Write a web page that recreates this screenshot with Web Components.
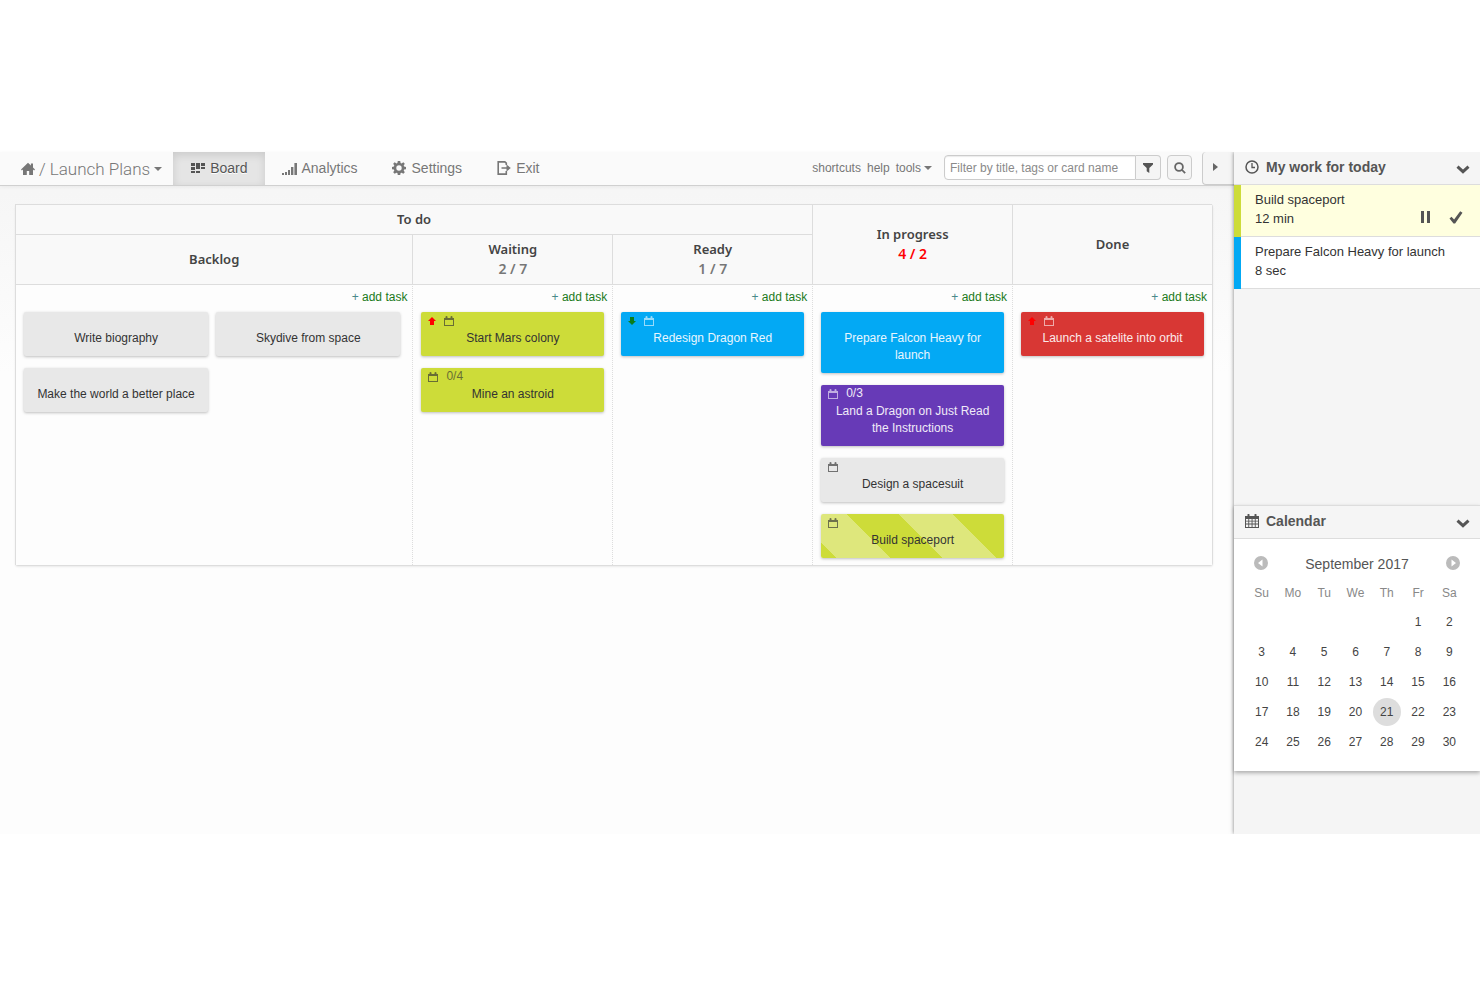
<!DOCTYPE html>
<html lang="en">
<head>
<meta charset="utf-8">
<title>Launch Plans - Board</title>
<style>
    body {
        margin: 0;
        min-height: 100vh;
        box-sizing: border-box;
        padding: 152px 0 153px;
        display: flex;
        background: #fff;
        color: #333;
        font-family: "Liberation Sans", Arial, sans-serif;
        font-size: 12px;
    }
</style>
</head>
<body>

<plan-app>
    <top-bar slot="top" project="Launch Plans">
        <nav-tab icon="board" active>Board</nav-tab>
        <nav-tab icon="signal">Analytics</nav-tab>
        <nav-tab icon="gear">Settings</nav-tab>
        <nav-tab icon="exit">Exit</nav-tab>
    </top-bar>

    <kanban-board slot="board">
        <task-card slot="backlog">Write biography</task-card>
        <task-card slot="backlog">Skydive from space</task-card>
        <task-card slot="backlog">Make the world a better place</task-card>

        <task-card slot="waiting" color="lime" priority="up" due>Start Mars colony</task-card>
        <task-card slot="waiting" color="lime" due subtasks="0/4">Mine an astroid</task-card>

        <task-card slot="ready" color="blue" priority="down" due>Redesign Dragon Red</task-card>

        <task-card slot="progress" color="blue">Prepare Falcon Heavy for launch</task-card>
        <task-card slot="progress" color="purple" due subtasks="0/3">Land a Dragon on Just Read the Instructions</task-card>
        <task-card slot="progress" due>Design a spacesuit</task-card>
        <task-card slot="progress" color="lime" due running>Build spaceport</task-card>

        <task-card slot="done" color="red" priority="up" due>Launch a satelite into orbit</task-card>
    </kanban-board>

    <side-panel slot="side" icon="clock" heading="My work for today" class="work">
        <work-item time="12 min" color="#cddc39" active>Build spaceport</work-item>
        <work-item time="8 sec" color="#03a9f4">Prepare Falcon Heavy for launch</work-item>
    </side-panel>
    <side-panel slot="side" icon="calendar" heading="Calendar" class="month">
        <month-calendar year="2017" month="9" today="21"></month-calendar>
    </side-panel>
</plan-app>

<script>
// [viewBox size, markup]
const ICONS = {
    home: ['0 0 14 14', '<path d="M7 .8 0 7.4l.9 1L2 7.5V13h3.8V9h2.4v4H12V7.5l1.1.9.9-1-2-1.9V1.6H9.9v1.9z"/>'],
    caret: ['0 0 8 4', '<path d="M0 0h8L4 4z"/>'],
    board: ['0 0 14 11', '<path d="M0 0h4v3H0zM0 4h4v3H0zM0 8h4v2H0zM5 0h4v6H5zM5 8h4v2H5zM10 0h4v3h-4zM10 4h4v2h-4z"/>'],
    signal: ['0 0 15 13', '<path d="M0 11h2v2H0zM3 10h2v3H3zM6 8h2v5H6zM9 5h2.400v8H9zM12.400 1H15v12h-2.600z"/>'],
    gear: ['0 0 14 14', '<path fill-rule="evenodd" d="M5.800 0h2.400l.4 2 1 .4 1.700-1.100 1.500 1.500-1.100 1.700.4 1 2 .4v2.300l-2 .4-.4 1 1.100 1.700-1.500 1.500-1.700-1.100-1 .4-.4 2H5.800l-.4-2-1-.4-1.700 1.100-1.500-1.500 1.100-1.700-.4-1-2-.4V5.900l2-.4.4-1-1.100-1.700 1.500-1.500 1.700 1.100 1-.4zM7 4.300a2.700 2.700 0 1 0 0 5.400 2.700 2.700 0 0 0 0-5.400z"/>'],
    exit: ['0 0 14 14', '<path fill="none" stroke="currentColor" stroke-width="1.600" d="M9.300 4V2.200L7.800.9H1.200v12.200h8.100V10"/><path d="M4.500 6.200h5V3.400L13.800 7l-4.300 3.600V7.800h-5z"/>'],
    filter: ['0 0 10 10', '<path d="M0 0h10v1.500L6.300 5v5L3.700 8.200V5L0 1.500z"/>'],
    search: ['0 0 12 12', '<circle cx="5" cy="5" r="3.900" fill="none" stroke="currentColor" stroke-width="1.800"/><path d="M7.400 8.600 8.700 7.400l3.100 3-1.300 1.300z"/>'],
    right: ['0 0 5 8', '<path d="M0 0l5 4-5 4z"/>'],
    clock: ['0 0 14 14', '<circle cx="7" cy="7" r="6" fill="none" stroke="currentColor" stroke-width="1.500"/><path fill="none" stroke="currentColor" stroke-width="1.300" d="M7 3v4.500h3"/>'],
    calendar: ['0 0 14 14', '<path fill-rule="evenodd" d="M0 2h2.500V.8A.8.8 0 0 1 4.500.8V2h5V.8a.8.8 0 0 1 2 0V2H14v12H0zM1 5v1.700h2.300V5zm3.200 0v1.700h2.400V5zm3.300 0v1.700h2.300V5zm3.200 0v1.700H13V5zM1 7.600v2h2.300v-2zm3.200 0v2h2.400v-2zm3.300 0v2h2.300v-2zm3.200 0v2H13v-2zM1 10.500V13h2.300v-2.500zm3.200 0V13h2.400v-2.500zm3.300 0V13h2.300v-2.500zm3.200 0V13H13v-2.500z"/>'],
    chevron: ['0 0 14 9', '<path fill="none" stroke="currentColor" stroke-width="3" d="M1.500 1.700 7 6.700l5.500-5"/>'],
    pause: ['0 0 11 12', '<path d="M1 0h3v12H1zM7 0h3v12H7z"/>'],
    check: ['0 0 14 13', '<path d="M.5 7.600 2.500 5.700l2.600 2.700L11.200.300l2.300 1.400L6.100 12.500H4.500z"/>'],
    up: ['0 0 8 8', '<path d="M4 0l4 4H6v4H2V4H0z"/>'],
    down: ['0 0 8 8', '<path d="M4 8l4-4H6V0H2v4H0z"/>'],
    due: ['0 0 10 10', '<path d="M0 2h1.500V1a1 1 0 0 1 2 0v1h3V1a1 1 0 0 1 2 0v1H10v8H0zM1 4v5h8V4z" fill-rule="evenodd"/>'],
    prev: ['0 0 14 14', '<path fill-rule="evenodd" d="M7 0a7 7 0 1 1 0 14A7 7 0 0 1 7 0zm1.500 3.500L4 7l4.500 3.500z"/>'],
    next: ['0 0 14 14', '<path fill-rule="evenodd" d="M7 0a7 7 0 1 1 0 14A7 7 0 0 1 7 0zM5.500 3.500v7L10 7z"/>']
};

class AppIcon extends HTMLElement {
    connectedCallback() {
        if (this.shadowRoot) return;
        const [box, shape] = ICONS[this.getAttribute('name')];
        const [, , w, h] = box.split(' ');
        this.attachShadow({ mode: "open" }).innerHTML = `
        <style>
            :host { display: inline-flex; flex: none; }
            svg { display: block; fill: currentColor; }
        </style>
        <svg viewBox="${box}" width="${w}" height="${h}" aria-hidden="true">${shape}</svg>
    `;
    }
}

// Page frame: top bar and board on the left, panels on the right
class PlanApp extends HTMLElement {
    constructor() {
        super();
        this.attachShadow({ mode: "open" }).innerHTML = `
        <style>
            :host { display: flex; flex: 1; min-width: 0; }
            main {
                flex: 1;
                min-width: 0;
                background: linear-gradient(#f5f5f5, #f6f6f6 40px, #fdfdfd 220px);
            }
            .board { padding: 18px 21px 20px 15px; }
            aside {
                position: relative;
                width: 246px;
                flex: none;
                background: #f5f5f5;
                box-shadow: 0 0 4px rgba(0, 0, 0, .5);
                clip-path: inset(0 0 0 -6px);
            }
        </style>
        <main>
            <slot name="top"></slot>
            <div class="board"><slot name="board"></slot></div>
        </main>
        <aside><slot name="side"></slot></aside>
    `;
    }
}

class NavTab extends HTMLElement {
    connectedCallback() {
        if (this.shadowRoot) return;
        this.attachShadow({ mode: "open" }).innerHTML = `
        <style>
            :host { display: flex; }
            a {
                display: flex;
                align-items: center;
                gap: 5px;
                padding: 0 17px 1px;
                font-size: 14px;
                color: #777;
                text-decoration: none;
                text-shadow: 0 1px 0 #fff;
            }
            .icon { width: 15px; display: flex; justify-content: center; }
            :host([active]) a {
                color: #555;
                background: #e5e5e5;
                box-shadow: inset 0 3px 8px rgba(0, 0, 0, .12);
            }
        </style>
        <a href="#"><span class="icon"><app-icon name="${this.getAttribute('icon')}"></app-icon></span><slot></slot></a>
    `;
    }
}

class TopBar extends HTMLElement {
    connectedCallback() {
        if (this.shadowRoot) return;
        this.attachShadow({ mode: "open" }).innerHTML = `
        <style>
            :host {
                display: flex;
                height: 33px;
                background: #fafafa;
                border-bottom: 1px solid #d0d0d0;
                box-shadow: 0 1px 4px rgba(0, 0, 0, .06);
                color: #777;
            }
            a { color: inherit; text-decoration: none; }
            .project {
                display: flex;
                align-items: center;
                gap: 4px;
                padding: 1px 11px 0 21px;
                font: 300 17px Roboto, sans-serif;
            }
            .project a { display: flex; align-items: center; gap: 4px; }
            nav { display: flex; flex: 1; }
            .links { display: flex; align-items: center; gap: 6px; padding: 0 12px 2px 0; }
            .links a { display: flex; align-items: center; gap: 3px; }
            form { display: flex; align-items: center; padding-bottom: 2px; }
            input, button {
                box-sizing: border-box;
                height: 25px;
                margin: 0;
                border: 1px solid #ccc;
                font: inherit;
            }
            input {
                width: 192px;
                padding: 0 5px;
                background: #fff;
                border-radius: 4px 0 0 4px;
                box-shadow: inset 0 1px 1px rgba(0, 0, 0, .08);
            }
            input::placeholder { color: #8a8a8a; opacity: 1; }
            button {
                display: flex;
                align-items: center;
                justify-content: center;
                width: 25px;
                padding: 0;
                color: #666;
                background: #f5f5f5;
            }
            .filter { border-left: 0; border-radius: 0 4px 4px 0; color: #555; }
            .search { margin: 0 10px 0 6px; border-radius: 4px; }
            .toggle {
                width: 32px;
                height: 33px;
                padding: 0 7px 2px 0;
                border-width: 0 0 1px 1px;
                border-radius: 4px 0 0 4px;
            }
        </style>
        <div class="project">
            <a href="#" aria-label="Home"><app-icon name="home"></app-icon></a>
            <span>/</span>
            <a href="#">${this.getAttribute('project')} <app-icon name="caret"></app-icon></a>
        </div>
        <nav><slot></slot></nav>
        <div class="links">
            <a href="#">shortcuts</a>
            <a href="#">help</a>
            <a href="#">tools <app-icon name="caret"></app-icon></a>
        </div>
        <form>
            <input type="text" aria-label="Filter cards" placeholder="Filter by title, tags or card name">
            <button type="button" class="filter" aria-label="Filter"><app-icon name="filter"></app-icon></button>
            <button type="button" class="search" aria-label="Search"><app-icon name="search"></app-icon></button>
        </form>
        <button type="button" class="toggle" aria-label="Hide panel"><app-icon name="right"></app-icon></button>
    `;
    }
}

class KanbanBoard extends HTMLElement {
    constructor() {
        super();
        const columns = ['backlog', 'waiting', 'ready', 'progress', 'done'];
        const cells = columns.map(name => `
            <td class="${name}">
                <a class="add" href="#"><span>+</span> add task</a>
                <div class="cards"><slot name="${name}"></slot></div>
            </td>`).join('');

        this.attachShadow({ mode: "open" }).innerHTML = `
        <style>
            :host { display: block; }
            table {
                width: 100%;
                table-layout: fixed;
                border-collapse: separate;
                border-spacing: 0;
                border: solid #ddd;
                border-width: 0 1px 1px 0;
                border-radius: 3px;
                box-shadow: 0 1px 2px rgba(0, 0, 0, .08);
            }
            col { width: 16.7%; }
            col:first-child { width: 33.2%; }
            th {
                height: 47px;
                padding: 0 0 2px;
                border: solid #ddd;
                border-width: 1px 0 0 1px;
                background: #f9f9f9;
                color: #444;
                font: 600 13px/20px "Noto Sans", sans-serif;
            }
            th.group { height: 27px; }
            th span { display: block; color: #777; font-size: 14px; }
            th span.over { color: #f00; }
            td {
                height: 270px;
                padding: 4px 8px 6px;
                vertical-align: top;
                background: #fdfdfd;
                border-top: 1px solid #ddd;
                border-left: 1px dotted #ddd;
            }
            td:first-child { border-left-style: solid; padding-right: 12px; }
            .add {
                display: block;
                margin: 0 -3px 7px 0;
                line-height: 16px;
                text-align: right;
                text-decoration: none;
                color: #1b7a1b;
            }
            td:first-child .add { margin-right: -7px; }
            .add span { color: #4a8a8a; }
            .cards { display: grid; gap: 12px 8px; }
            .backlog .cards { grid-template-columns: 1fr 1fr; }
        </style>
        <table>
            <colgroup><col><col><col><col><col></colgroup>
            <thead>
                <tr>
                    <th class="group" colspan="3">To do</th>
                    <th rowspan="2">In progress<span class="over">4 / 2</span></th>
                    <th rowspan="2">Done</th>
                </tr>
                <tr>
                    <th>Backlog</th>
                    <th>Waiting<span>2 / 7</span></th>
                    <th>Ready<span>1 / 7</span></th>
                </tr>
            </thead>
            <tbody><tr>${cells}</tr></tbody>
        </table>
    `;
    }
}

class TaskCard extends HTMLElement {
    connectedCallback() {
        if (this.shadowRoot) return;
        const priority = this.getAttribute('priority');
        const subtasks = this.getAttribute('subtasks');

        this.attachShadow({ mode: "open" }).innerHTML = `
        <style>
            :host {
                display: block;
                padding-bottom: 9px;
                border-radius: 2px;
                background: #e8e8e8;
                color: #333;
                text-align: center;
                line-height: 17px;
                box-shadow: 0 1px 3px rgba(0, 0, 0, .25);
            }
            :host([color="lime"]) { background: #cddc39; }
            :host([color="blue"]) { background: #03a9f4; color: #e8f6fe; }
            :host([color="purple"]) { background: #673ab7; color: #f0ebf8; }
            :host([color="red"]) { background: #d83734; color: #fbeaea; }
            /* the timer is running on this card */
            :host([running]) {
                background: repeating-linear-gradient(45deg, #cddc39 0 11px, #dee77c 11px 49px, #cddc39 49px 75px);
            }
            .meta { display: flex; align-items: center; gap: 8px; height: 17px; padding: 0 0 1px 7px; }
            .meta > * { opacity: .65; }
            .meta .priority { opacity: 1; }
            :host([color="purple"]) .meta span { opacity: 1; }
            .up { color: #f00; }
            .down { color: #0a7d1c; }
            .title { padding: 0 12px; }
        </style>
        <div class="meta">
            ${ priority ? `<app-icon class="priority ${priority}" name="${priority}"></app-icon>` : '' }
            ${ this.hasAttribute('due') ? '<app-icon name="due"></app-icon>' : '' }
            ${ subtasks ? `<span>${subtasks}</span>` : '' }
        </div>
        <div class="title"><slot></slot></div>
    `;
    }
}

class SidePanel extends HTMLElement {
    connectedCallback() {
        if (this.shadowRoot) return;
        this.attachShadow({ mode: "open" }).innerHTML = `
        <style>
            :host { display: block; }
            :host(.work) { height: 353px; }
            :host(.month) { border-top: 1px solid #ddd; box-shadow: 0 2px 4px rgba(0, 0, 0, .3); }
            header {
                display: flex;
                align-items: center;
                gap: 7px;
                height: 30px;
                padding: 0 10px 2px 11px;
                background: #f5f5f5;
                border-bottom: 1px solid #ddd;
                color: #555;
            }
            h2 { flex: 1; margin: 0; font-size: 14px; line-height: 18px; }
            button { padding: 4px 0 0; border: 0; background: none; color: inherit; }
        </style>
        <header>
            <app-icon name="${this.getAttribute('icon')}"></app-icon>
            <h2>${this.getAttribute('heading')}</h2>
            <button type="button" aria-label="Collapse"><app-icon name="chevron"></app-icon></button>
        </header>
        <slot></slot>
    `;
    }
}

class WorkItem extends HTMLElement {
    connectedCallback() {
        if (this.shadowRoot) return;
        const buttons = `
            <button type="button" aria-label="Pause"><app-icon name="pause"></app-icon></button>
            <button type="button" aria-label="Finish"><app-icon name="check"></app-icon></button>`;

        this.attachShadow({ mode: "open" }).innerHTML = `
        <style>
            :host {
                display: block;
                padding: 5px 17px 9px 14px;
                border-left: 7px solid ${this.getAttribute('color')};
                background: #fff;
                font-size: 13px;
                line-height: 19px;
                box-shadow: inset 0 -1px #ddd;
            }
            :host([active]) { background: #ffffdf; }
            .row { display: flex; align-items: center; height: 19px; }
            .row span { flex: 1; }
            button { padding: 0; margin-left: 18px; border: 0; background: none; color: #555; }
        </style>
        <div><slot></slot></div>
        <div class="row">
            <span>${this.getAttribute('time')}</span>
            ${ this.hasAttribute('active') ? buttons : '' }
        </div>
    `;
    }
}

class MonthCalendar extends HTMLElement {
    connectedCallback() {
        if (this.shadowRoot) return;
        const year = Number(this.getAttribute('year'));
        const month = Number(this.getAttribute('month'));
        const today = Number(this.getAttribute('today'));
        const title = new Date(year, month - 1, 1).toLocaleString('en-US', { month: 'long' });
        const first = new Date(year, month - 1, 1).getDay();
        const total = new Date(year, month, 0).getDate();

        let rows = '';
        for (let day = 1 - first; day <= total; day += 7) {
            rows += '<tr>';
            for (let d = day; d < day + 7; d++) {
                const valid = d > 0 && d <= total;
                rows += `<td>${ valid ? `<button type="button" class="${ d === today ? 'today' : '' }">${d}</button>` : '' }</td>`;
            }
            rows += '</tr>';
        }

        this.attachShadow({ mode: "open" }).innerHTML = `
        <style>
            :host { display: block; padding: 10px 15px 14px 12px; background: #fff; }
            .head { display: flex; align-items: center; height: 30px; padding: 0 5px 0 8px; font-size: 14px; color: #555; }
            .head span { flex: 1; text-align: center; }
            .head button { width: 14px; color: #bbb; }
            table { width: 100%; table-layout: fixed; border-collapse: collapse; }
            th, td { padding: 0; text-align: center; }
            th { height: 28px; font-weight: normal; color: #888; }
            td { height: 30px; }
            button { padding: 0; border: 0; background: none; font: inherit; color: #444; }
            td button { width: 28px; height: 28px; border-radius: 50%; }
            .today { background: #ddd; }
        </style>
        <div class="head">
            <button type="button" aria-label="Previous month"><app-icon name="prev"></app-icon></button>
            <span>${title} ${year}</span>
            <button type="button" aria-label="Next month"><app-icon name="next"></app-icon></button>
        </div>
        <table>
            <thead><tr>${['Su', 'Mo', 'Tu', 'We', 'Th', 'Fr', 'Sa'].map(d => `<th>${d}</th>`).join('')}</tr></thead>
            <tbody>${rows}</tbody>
        </table>
    `;
    }
}

customElements.define("app-icon", AppIcon);
customElements.define("plan-app", PlanApp);
customElements.define("nav-tab", NavTab);
customElements.define("top-bar", TopBar);
customElements.define("kanban-board", KanbanBoard);
customElements.define("task-card", TaskCard);
customElements.define("side-panel", SidePanel);
customElements.define("work-item", WorkItem);
customElements.define("month-calendar", MonthCalendar);
</script>
</body>
</html>
